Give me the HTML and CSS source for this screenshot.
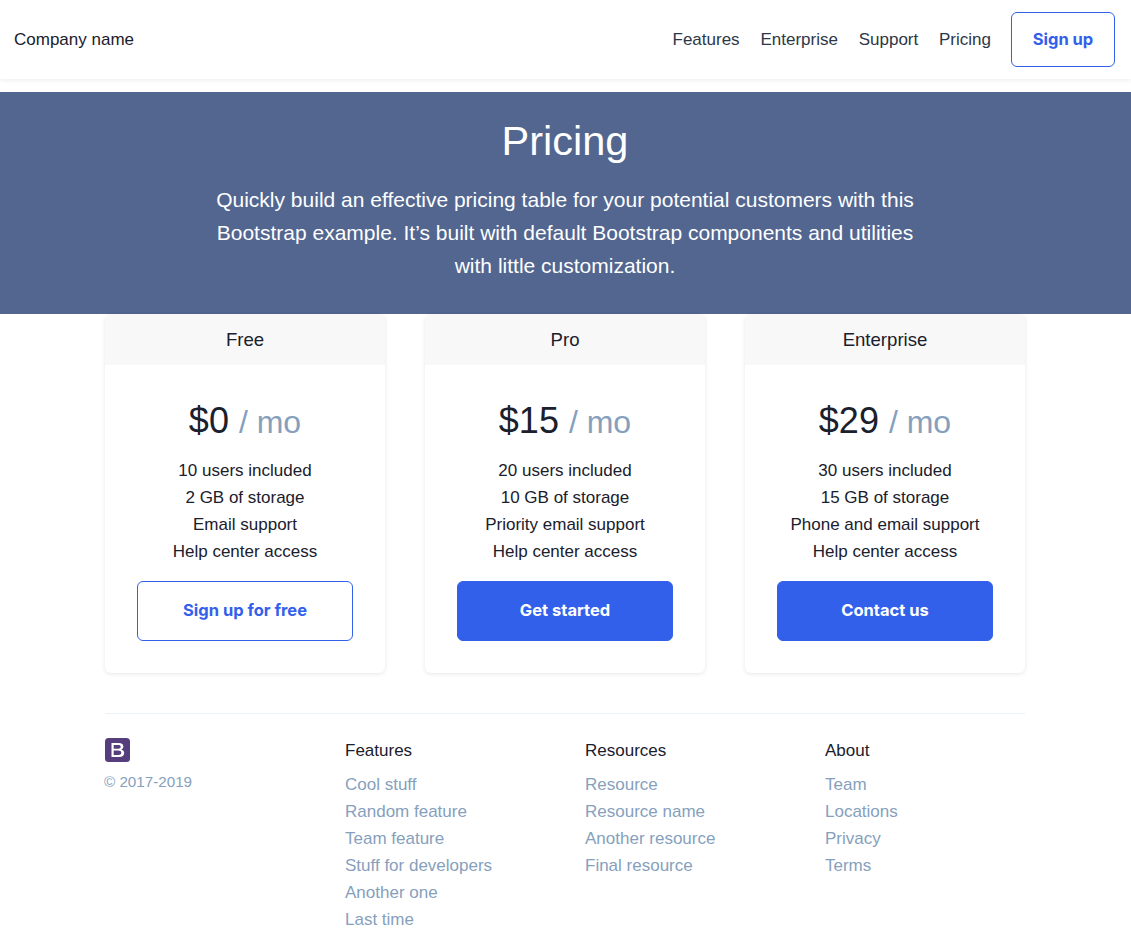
FILE: index.html
```html
<!DOCTYPE html>
<html lang="en">
<head>
<meta charset="utf-8">
<title>Pricing</title>
<link rel="stylesheet" href="styles.css">
</head>
<body>
<header class="navbar">
  <div class="brand">Company name</div>
  <nav class="nav">
    <a href="#">Features</a>
    <a href="#">Enterprise</a>
    <a href="#">Support</a>
    <a href="#">Pricing</a>
  </nav>
  <a class="btn btn-outline btn-nav" href="#">Sign up</a>
</header>
<section class="hero">
  <h1>Pricing</h1>
  <p>Quickly build an effective pricing table for your potential customers with this Bootstrap example. It’s built with default Bootstrap components and utilities with little customization.</p>
</section>
<main class="container">
  <div class="cards">
    <article class="card">
      <h2 class="card-head">Free</h2>
      <div class="card-body">
        <div class="price">$0 <small>/ mo</small></div>
        <ul>
          <li>10 users included</li>
          <li>2 GB of storage</li>
          <li>Email support</li>
          <li>Help center access</li>
        </ul>
        <a class="btn btn-outline btn-card" href="#">Sign up for free</a>
      </div>
    </article>
    <article class="card">
      <h2 class="card-head">Pro</h2>
      <div class="card-body">
        <div class="price">$15 <small>/ mo</small></div>
        <ul>
          <li>20 users included</li>
          <li>10 GB of storage</li>
          <li>Priority email support</li>
          <li>Help center access</li>
        </ul>
        <a class="btn btn-solid btn-card" href="#">Get started</a>
      </div>
    </article>
    <article class="card">
      <h2 class="card-head">Enterprise</h2>
      <div class="card-body">
        <div class="price">$29 <small>/ mo</small></div>
        <ul>
          <li>30 users included</li>
          <li>15 GB of storage</li>
          <li>Phone and email support</li>
          <li>Help center access</li>
        </ul>
        <a class="btn btn-solid btn-card" href="#">Contact us</a>
      </div>
    </article>
  </div>
  <footer class="footer">
    <div class="foot-col">
      <svg class="logo" width="25" height="24" viewBox="0 0 25 24" aria-hidden="true">
        <rect width="25" height="24" rx="3.5" fill="#563d7c"/>
        <path fill="#fff" fill-rule="evenodd" d="M6.500 5h7.400c2.800 0 4.500 1.300 4.500 3.500 0 1.500-.9 2.600-2.300 3v.1c1.900.3 3.100 1.600 3.100 3.500 0 2.500-1.900 3.900-5 3.900H6.500V5zm2.200 2v3.800h3.900c1.800 0 3.100-.5 3.100-2 0-1.200-.9-1.800-2.600-1.800H8.700zm0 5.600V17h4.400c1.900 0 3.200-.6 3.200-2.200 0-1.500-1.200-2.200-3.400-2.200H8.700z"/>
      </svg>
      <small class="copy">© 2017-2019</small>
    </div>
    <div class="foot-col">
      <h5>Features</h5>
      <ul>
        <li><a href="#">Cool stuff</a></li>
        <li><a href="#">Random feature</a></li>
        <li><a href="#">Team feature</a></li>
        <li><a href="#">Stuff for developers</a></li>
        <li><a href="#">Another one</a></li>
        <li><a href="#">Last time</a></li>
      </ul>
    </div>
    <div class="foot-col">
      <h5>Resources</h5>
      <ul>
        <li><a href="#">Resource</a></li>
        <li><a href="#">Resource name</a></li>
        <li><a href="#">Another resource</a></li>
        <li><a href="#">Final resource</a></li>
      </ul>
    </div>
    <div class="foot-col">
      <h5>About</h5>
      <ul>
        <li><a href="#">Team</a></li>
        <li><a href="#">Locations</a></li>
        <li><a href="#">Privacy</a></li>
        <li><a href="#">Terms</a></li>
      </ul>
    </div>
  </footer>
</main>
</body>
</html>
```
FILE: styles.css
```css
* { box-sizing: border-box; }
html, body { margin: 0; padding: 0; }
body {
  height: 938px;
  overflow: hidden;
  background: #fff;
  color: #1a202c;
  font-family: "Liberation Sans", Arial, sans-serif;
  font-size: 17px;
  line-height: 27px;
}
a { text-decoration: none; }
ul { list-style: none; margin: 0; padding: 0; }

.navbar {
  display: flex;
  align-items: center;
  height: 79px;
  padding: 0 16px 0 14px;
  background: #fff;
  box-shadow: 0 2px 4px rgba(0, 0, 0, .06);
  position: relative;
}
.brand { margin-right: auto; }
.nav { display: flex; gap: 20.8px; margin-right: 20px; }
.nav a { color: #2d3748; }

.btn {
  display: flex;
  align-items: center;
  justify-content: center;
  border-radius: 6px;
  font-family: Inter, "Liberation Sans", sans-serif;
  font-weight: 700;
  font-size: 16.5px;
}
.btn-outline { color: #3360eb; border: 1px solid #3360eb; background: #fff; }
.btn-solid { color: #fff; background: #3360eb; border: 1px solid #3360eb; }
.btn-nav { width: 104px; height: 55px; }
.btn-card { width: 216px; height: 60px; margin: 16px auto 0; padding-bottom: 2px; }

.hero {
  margin-top: 13px;
  height: 222px;
  background: #526690;
  color: #fff;
  text-align: center;
  padding: 22px 1px 0 0;
}
.hero h1 {
  margin: 0;
  font-weight: 400;
  font-size: 41.5px;
  line-height: 53px;
}
.hero p {
  margin: 16px auto 0;
  width: 700px;
  font-size: 21px;
  line-height: 33px;
}

.container { padding: 0 106px 0 105px; }
.cards { display: grid; grid-template-columns: repeat(3, 280px); gap: 40px; }
.card {
  height: 359px;
  border-radius: 6px;
  background: #fff;
  box-shadow: 0 1px 4px rgba(0, 0, 0, .1);
  overflow: hidden;
  text-align: center;
}
.card-head {
  margin: 0;
  height: 51px;
  background: #f8f8f8;
  font-weight: 400;
  font-size: 18.6px;
  line-height: 51px;
}
.card-body { padding: 33px 32px 0; }
.price { font-size: 36px; line-height: 45px; margin-bottom: 12px; }
.price small { font-size: 32px; color: #869fbd; }

.footer {
  display: grid;
  grid-template-columns: repeat(4, 240px);
  margin-top: 40px;
  padding-top: 24px;
  border-top: 1px solid #edf2f7;
}
.logo { display: block; margin-bottom: 8px; }
.copy { display: block; font-size: 15.2px; line-height: 24px; color: #869fbd; margin-left: -1px; }
.foot-col h5 {
  margin: 1px 0 8px;
  font-weight: 400;
  font-size: 17px;
  line-height: 24px;
}
.foot-col li a { color: #869fbd; }
```
